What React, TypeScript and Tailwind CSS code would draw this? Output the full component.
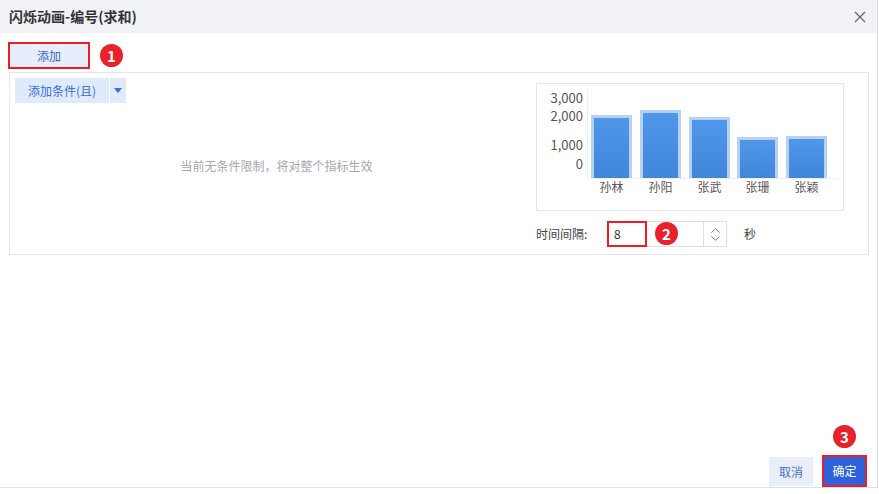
import React from "react"

const font = { fontFamily: '"Noto Sans CJK SC", "Noto Sans", sans-serif' }

const bars = [
  { name: "孙林", x: 54, top: 31 },
  { name: "孙阳", x: 103, top: 26 },
  { name: "张武", x: 152, top: 33 },
  { name: "张珊", x: 200, top: 53 },
  { name: "张颖", x: 249, top: 52 },
]

function Badge({ n }: { n: number }) {
  return (
    <span className="flex h-[23px] w-[23px] items-center justify-center rounded-full bg-[#e8212a] text-[15px] font-bold leading-none text-white">
      {n}
    </span>
  )
}

function Chart() {
  return (
    <svg width="306" height="126" viewBox="0 0 306 126" className="block">
      <defs>
        <linearGradient id="barFill" x1="0" y1="0" x2="0" y2="1">
          <stop offset="0" stopColor="#4f97ea" />
          <stop offset="1" stopColor="#4186d8" />
        </linearGradient>
      </defs>
      <line x1="50.5" y1="4" x2="50.5" y2="94" stroke="#eef0f3" />
      <line x1="50" y1="94.5" x2="300" y2="94.5" stroke="#eef0f3" />
      {[
        ["3,000", 15],
        ["2,000", 33],
        ["1,000", 62],
        ["0", 81],
      ].map(([t, y]) => (
        <text key={t} x="46" y={y as number} textAnchor="end" dominantBaseline="middle" fontSize="13" fill="#555" style={font}>
          {t}
        </text>
      ))}
      {bars.map((b) => (
        <g key={b.name}>
          <rect x={b.x} y={b.top} width="41" height={94 - b.top} fill="#b5d1f3" />
          <rect x={b.x + 3} y={b.top + 3} width="35" height={91 - b.top} fill="url(#barFill)" />
          <text x={b.x + 20.5} y="105" textAnchor="middle" dominantBaseline="middle" fontSize="12" fill="#555" style={font}>
            {b.name}
          </text>
        </g>
      ))}
    </svg>
  )
}

export default function App() {
  return (
    <div className="h-[494px] w-[879px] overflow-hidden bg-white" style={font}>
      <div className="flex h-[488px] w-[878px] flex-col border-r border-b border-[#dcdfe6]">
        <div className="flex h-[33px] shrink-0 items-center justify-between bg-[#f0f2f6] pl-[9px] pr-[11px]">
          <span className="text-[14px] font-bold text-[#333]">闪烁动画-编号(求和)</span>
          <svg width="12" height="12" viewBox="0 0 12 12">
            <path d="M1 1L11 11M11 1L1 11" stroke="#666" strokeWidth="1.2" />
          </svg>
        </div>

        <div className="flex-1 px-[8px] pt-[9px]">
          <div className="flex items-center">
            <div className="flex h-[27px] w-[82px] items-center justify-center border-2 border-[#ee1c25] bg-[#e7eefb] text-[12px] text-[#3a66c4]">
              添加
            </div>
            <span className="ml-[10px]">
              <Badge n={1} />
            </span>
          </div>

          <div className="ml-[1px] mt-[3px] flex h-[183px] border border-[#e4e6ea]">
            <div className="flex flex-1 flex-col pl-[5px] pt-[5px]">
              <div className="flex h-[25px] self-start">
                <div className="flex items-center bg-[#dfeafc] px-[13px] text-[12px] text-[#3a6fd8]">添加条件(且)</div>
                <div className="ml-px flex w-[16px] items-center justify-center bg-[#dfeafc]">
                  <svg width="8" height="5" viewBox="0 0 8 5">
                    <path d="M0 0H8L4 5Z" fill="#3a6fd8" />
                  </svg>
                </div>
              </div>
              <div className="flex flex-1 items-center justify-center pb-[26px] pl-[2px] text-[12px] text-[#a3a8b1]">
                当前无条件限制，将对整个指标生效
              </div>
            </div>

            <div className="w-[332px] pt-[10px]">
              <div className="h-[128px] w-[308px] border border-[#e4e6ea]">
                <Chart />
              </div>
              <div className="relative mt-[10px] flex items-center">
                <span className="w-[71px] text-[12px] text-[#444]">时间间隔:</span>
                <div className="relative flex h-[26px] w-[120px] border border-[#dcdfe6]">
                  <div className="flex flex-1 items-center pl-[6px] text-[12px] text-[#333]">8</div>
                  <div className="flex w-[23px] flex-col items-center justify-center gap-[3px] border-l border-[#dcdfe6]">
                    <svg width="9" height="5" viewBox="0 0 9 5">
                      <path d="M0.5 4.5L4.5 0.8L8.5 4.5" stroke="#777" fill="none" />
                    </svg>
                    <svg width="9" height="5" viewBox="0 0 9 5">
                      <path d="M0.5 0.5L4.5 4.2L8.5 0.5" stroke="#777" fill="none" />
                    </svg>
                  </div>
                  <div className="absolute -left-px -top-px h-[26px] w-[40px] border-2 border-[#ee1c25]" />
                  <span className="absolute left-[47px] top-[0px]">
                    <Badge n={2} />
                  </span>
                </div>
                <span className="ml-[17px] text-[12px] text-[#444]">秒</span>
              </div>
            </div>
          </div>
        </div>

        <div className="relative flex shrink-0 items-end justify-end gap-[9px] pr-[10px]">
          <span className="absolute right-[21px] top-[-30px]">
            <Badge n={3} />
          </span>
          <div className="mb-px flex h-[29px] w-[44px] items-center justify-center bg-[#e9eef8] text-[12px] text-[#4a72c8]">
            取消
          </div>
          <div className="flex h-[32px] w-[45px] items-center justify-center border-2 border-[#ee1c25] bg-[#2d62dc] text-[12px] text-white">
            确定
          </div>
        </div>
      </div>
    </div>
  )
}
